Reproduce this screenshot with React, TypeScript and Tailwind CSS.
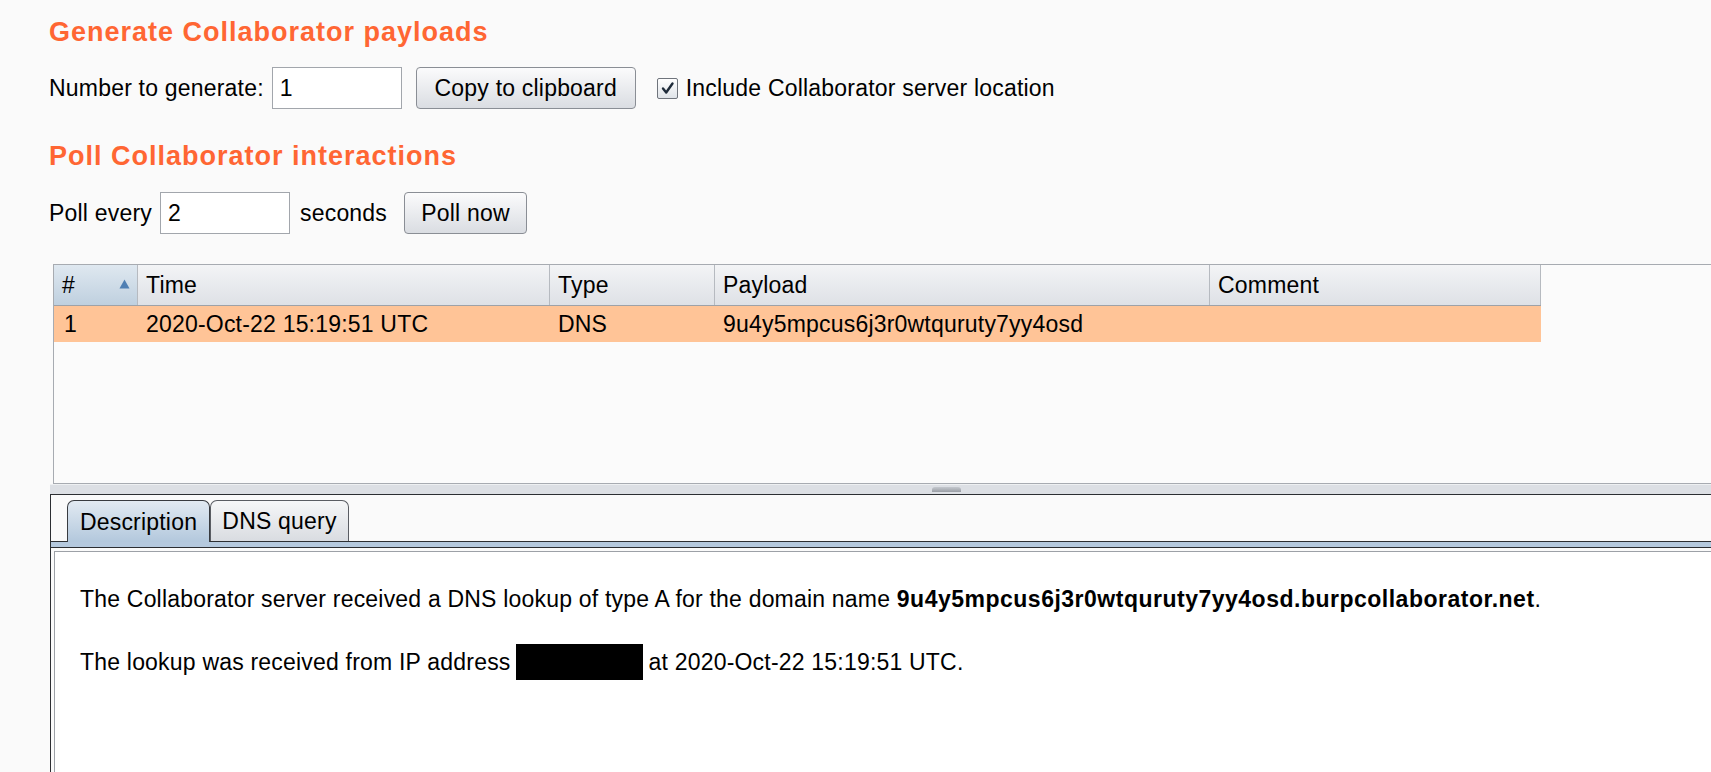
import React from "react";

const cols = [
  { label: "#", w: "w-[84px]", sorted: true },
  { label: "Time", w: "w-[412px]" },
  { label: "Type", w: "w-[165px]" },
  { label: "Payload", w: "w-[495px]" },
  { label: "Comment", w: "w-[331px]" },
];

const row = ["1", "2020-Oct-22 15:19:51 UTC", "DNS", "9u4y5mpcus6j3r0wtquruty7yy4osd", ""];

function Checkbox() {
  return (
    <div className="w-[21px] h-[21px] border border-[#6f747c] rounded-[2px] bg-gradient-to-b from-[#ffffff] to-[#dfe3e8] flex items-center justify-center">
      <svg width="15" height="15" viewBox="0 0 15 15">
        <path d="M3 7.5 L6.2 11.5 L12.5 2.5" fill="none" stroke="#1f2b3a" strokeWidth="2.4" strokeLinecap="round" strokeLinejoin="round" />
      </svg>
    </div>
  );
}

export default function App() {
  return (
    <div className="w-[1711px] h-[772px] overflow-hidden bg-[#fafafa] text-black text-[23px] leading-[32px] tracking-[0.2px] font-['Liberation_Sans',Arial,sans-serif] flex flex-col">
      <div className="pl-[49px] pt-[16px] flex flex-col shrink-0">
        <div className="text-[27px] leading-[32px] font-bold tracking-[1px] text-[#ff6633]">
          Generate Collaborator payloads
        </div>
        <div className="mt-[19px] flex items-center h-[42px]">
          <span>Number to generate:</span>
          <div className="ml-[8px] w-[130px] h-[42px] border border-[#a2a6ac] bg-white flex items-center pl-[7px]">1</div>
          <div className="ml-[14px] w-[220px] h-[42px] rounded-[4px] border border-[#8a8e95] bg-gradient-to-b from-[#fbfbfc] to-[#dadde2] flex items-center justify-center">
            Copy to clipboard
          </div>
          <div className="ml-[21px]">
            <Checkbox />
          </div>
          <span className="ml-[8px]">Include Collaborator server location</span>
        </div>
        <div className="mt-[31px] text-[27px] leading-[32px] font-bold tracking-[1px] text-[#ff6633]">
          Poll Collaborator interactions
        </div>
        <div className="mt-[20px] flex items-center h-[42px]">
          <span>Poll every</span>
          <div className="ml-[8px] w-[130px] h-[42px] border border-[#a2a6ac] bg-white flex items-center pl-[7px]">2</div>
          <span className="ml-[10px]">seconds</span>
          <div className="ml-[17px] w-[123px] h-[42px] rounded-[4px] border border-[#8a8e95] bg-gradient-to-b from-[#fbfbfc] to-[#dadde2] flex items-center justify-center">
            Poll now
          </div>
        </div>
      </div>

      {/* table */}
      <div className="pl-[53px] mt-[30px] shrink-0">
        <div className="h-[220px] border-t border-l border-b border-[#a7abb1] bg-[#fbfbfb]">
          <div className="flex h-[41px] w-[1487px] border-b border-[#9ea2a8]">
            {cols.map((c) => (
              <div
                key={c.label}
                className={`${c.w} shrink-0 h-[40px] flex items-center pl-[8px] border-r border-[#b6bac0] relative ${
                  c.sorted
                    ? "bg-gradient-to-b from-[#dfe8f0] to-[#bfd0df]"
                    : "bg-gradient-to-b from-[#f3f4f6] to-[#dee1e6]"
                }`}
              >
                {c.label}
                {c.sorted && (
                  <svg className="absolute right-[7px] top-[14px]" width="11" height="10" viewBox="0 0 11 10">
                    <path d="M5.5 0.5 L10.5 9.5 L0.5 9.5 Z" fill="#4f7fb3" />
                  </svg>
                )}
              </div>
            ))}
          </div>
          <div className="flex h-[36px] w-[1487px] bg-[#ffc497]">
            {cols.map((c, i) => (
              <div key={c.label} className={`${c.w} shrink-0 h-[36px] flex items-center ${i === 0 ? "pl-[10px]" : "pl-[8px]"}`}>
                {row[i]}
              </div>
            ))}
          </div>
        </div>
      </div>

      {/* divider */}
      <div className="ml-[50px] h-[10px] shrink-0 bg-[#dcdfe4] border-t border-[#eef0f2] flex pl-[882px]">
        <div className="mt-[2px] w-[29px] h-[5px] rounded-t-[3px] bg-gradient-to-b from-[#c4c8ce] to-[#9a9ea5]" />
      </div>

      {/* tabbed pane */}
      <div className="ml-[50px] flex-1 border-t border-l border-[#2c2e32] bg-[#fafafa] flex flex-col">
        <div className="pt-[5px] pl-[16px] flex items-end border-b border-[#2c2e32] shrink-0">
          <div className="w-[143px] h-[42px] -mb-px rounded-t-[7px] border border-b-0 border-[#383b40] bg-gradient-to-b from-[#e2eaf2] to-[#b3c8dd] flex items-center justify-center">
            Description
          </div>
          <div className="w-[139px] h-[41px] rounded-t-[7px] border border-b-0 border-[#5a5d63] bg-gradient-to-b from-[#f6f7f8] to-[#d9dce1] flex items-center justify-center">
            DNS query
          </div>
        </div>
        <div className="h-[6px] shrink-0 bg-[#b5c9de] border-b border-[#2c2e32]" />
        <div className="ml-[3px] mt-[3px] flex-1 border-t border-l border-[#9da1a7] bg-white pl-[25px] pt-[31px]">
          <div className="whitespace-nowrap">
            The Collaborator server received a DNS lookup of type A for the domain name{" "}
            <span className="font-bold tracking-[0.5px]">9u4y5mpcus6j3r0wtquruty7yy4osd.burpcollaborator.net</span>.
          </div>
          <div className="mt-[29px] flex items-center h-[36px] whitespace-nowrap">
            <span>The lookup was received from IP address</span>
            <div className="ml-[5px] w-[127px] h-[36px] bg-black" />
            <span className="ml-[6px]">at 2020-Oct-22 15:19:51 UTC.</span>
          </div>
        </div>
      </div>
    </div>
  );
}
